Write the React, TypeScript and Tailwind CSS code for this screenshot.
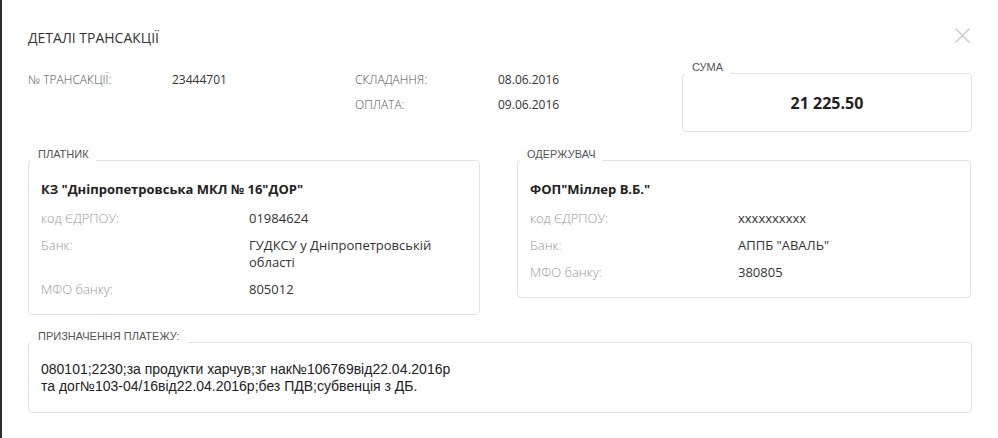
const payer = {
  name: 'КЗ "Дніпропетровська МКЛ № 16"ДОР"',
  rows: [
    { label: "код ЄДРПОУ:", value: "01984624" },
    { label: "Банк:", value: "ГУДКСУ у Дніпропетровській області" },
    { label: "МФО банку:", value: "805012" },
  ],
};

const receiver = {
  name: 'ФОП"Міллер В.Б."',
  rows: [
    { label: "код ЄДРПОУ:", value: "xxxxxxxxxx" },
    { label: "Банк:", value: 'АППБ "АВАЛЬ"' },
    { label: "МФО банку:", value: "380805" },
  ],
};

const Legend = ({ children }: { children: React.ReactNode }) => (
  <legend className="-ml-[10px] px-[7px] pb-[12px] text-[11px] leading-[13px] text-[#555] font-['Liberation_Sans',Arial,sans-serif] uppercase">
    {children}
  </legend>
);

const PartyCard = ({ title, party }: { title: string; party: typeof payer }) => (
  <fieldset className="border border-[#e0e4e6] rounded-[4px] px-[12px] pb-[16px]">
    <Legend>{title}</Legend>
    <div className="pt-[7px] text-[13px] leading-[18px] font-bold text-[#222]">{party.name}</div>
    <div className="mt-[12px] grid grid-cols-[208px_1fr] gap-y-[10px] text-[13px] leading-[17px]">
      {party.rows.map((row) => (
        <div key={row.label} className="contents">
          <div className="font-light text-[#999]">{row.label}</div>
          <div className="text-[#333]">{row.value}</div>
        </div>
      ))}
    </div>
  </fieldset>
);

const App = () => {
  return (
    <main className="min-h-[438px] bg-white border-l-2 border-[#2e2e2e] font-['Open_Sans',sans-serif] text-[#333]">
      <div className="pl-[26px] pr-[26px] pt-[28px]">
        {/* Header */}
        <div className="flex items-start justify-between">
          <h1 className="text-[14px] leading-[20px] font-normal text-[#333]">ДЕТАЛІ ТРАНСАКЦІЇ</h1>
          <button className="mr-[2px] mt-0 h-[15px] w-[15px] text-[#c8c8c8]" aria-label="close">
            <svg viewBox="0 0 15 15" width="15" height="15" fill="none" stroke="currentColor" strokeWidth="1.3">
              <path d="M0.5 0.5 L14.5 14.5 M14.5 0.5 L0.5 14.5" />
            </svg>
          </button>
        </div>

        {/* Summary */}
        <div className="mt-[13px] flex items-start">
          <div className="grid grid-cols-[144px_183px_143px_184px] gap-y-[8px] pt-[10px] text-[12px] leading-[17px]">
            <div className="font-light text-[#555]">№ ТРАНСАКЦІЇ:</div>
            <div>23444701</div>
            <div className="font-light text-[#555]">СКЛАДАННЯ:</div>
            <div>08.06.2016</div>
            <div />
            <div />
            <div className="font-light text-[#555]">ОПЛАТА:</div>
            <div>09.06.2016</div>
          </div>
          <fieldset className="w-[290px] border border-[#e0e4e6] rounded-[4px] pb-[17px]">
            <legend className="ml-[2px] px-[7px] pb-[11px] text-[11px] leading-[13px] text-[#555] font-['Liberation_Sans',Arial,sans-serif]">
              СУМА
            </legend>
            <div className="pt-[7px] text-center text-[16px] leading-[22px] font-bold text-[#222]">21 225.50</div>
          </fieldset>
        </div>

        {/* Parties */}
        <div className="mt-[16px] grid grid-cols-[452px_454px] gap-x-[37px] items-start">
          <PartyCard title="ПЛАТНИК" party={payer} />
          <PartyCard title="ОДЕРЖУВАЧ" party={receiver} />
        </div>

        {/* Purpose */}
        <fieldset className="mt-[15px] border border-[#e0e4e6] rounded-[4px] px-[12px] pb-[17px]">
          <Legend>ПРИЗНАЧЕННЯ ПЛАТЕЖУ:</Legend>
          <p className="pt-[6px] text-[14px] leading-[17px] text-[#222] font-['Liberation_Sans',Arial,sans-serif]">
            080101;2230;за продукти харчув;зг нак№106769від22.04.2016р
            <br />
            та дог№103-04/16від22.04.2016р;без ПДВ;субвенція з ДБ.
          </p>
        </fieldset>
      </div>
    </main>
  );
};

export default App;
